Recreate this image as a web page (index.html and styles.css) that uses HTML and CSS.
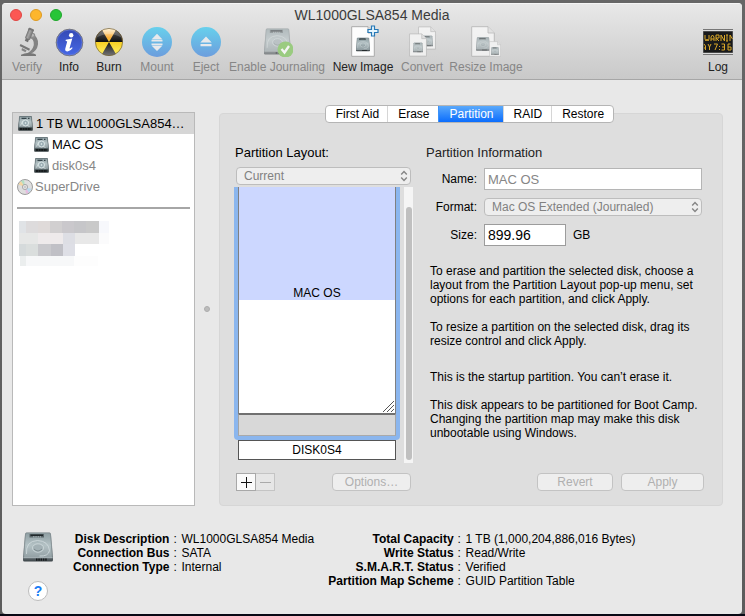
FILE: index.html
```html
<!DOCTYPE html>
<html lang="en">
<head>
<meta charset="utf-8">
<title>WL1000GLSA854 Media</title>
<link rel="stylesheet" href="styles.css">
</head>
<body>
<svg class="defs" aria-hidden="true">
  <defs>
    <linearGradient id="metal" x1="0" y1="0" x2="0" y2="1"><stop offset="0" stop-color="#8f9fa3"/><stop offset=".5" stop-color="#b4c2c5"/><stop offset="1" stop-color="#93a0a4"/></linearGradient>
    <linearGradient id="front" x1="0" y1="0" x2="0" y2="1"><stop offset="0" stop-color="#8b9498"/><stop offset=".8" stop-color="#7a8488"/><stop offset="1" stop-color="#3a4246"/></linearGradient>
    <linearGradient id="sky" x1="0" y1="0" x2="0" y2="1"><stop offset="0" stop-color="#67d0ec"/><stop offset="1" stop-color="#6c9ddd"/></linearGradient>
    <linearGradient id="indigo" x1="0" y1="0" x2="0" y2="1"><stop offset="0" stop-color="#3449b4"/><stop offset="1" stop-color="#4668e6"/></linearGradient>
    <linearGradient id="gold" x1="0" y1="0" x2="0" y2="1"><stop offset="0" stop-color="#fff0cf"/><stop offset=".35" stop-color="#f9ae3a"/><stop offset=".5" stop-color="#f7cf24"/><stop offset="1" stop-color="#fff36a"/></linearGradient>
    <linearGradient id="coal" x1="0" y1="0" x2="0" y2="1"><stop offset="0" stop-color="#555"/><stop offset=".45" stop-color="#111"/><stop offset="1" stop-color="#777"/></linearGradient>
    <linearGradient id="tube" x1="0" y1="0" x2="1" y2="0"><stop offset="0" stop-color="#6f6f6f"/><stop offset=".4" stop-color="#a8a8a8"/><stop offset="1" stop-color="#6f6f6f"/></linearGradient>
    <symbol id="drive" viewBox="0 0 30 30">
      <path d="M3.500.500h23q1.300 0 1.500 1.500L30 25v3q0 1.500-1.500 1.500h-27Q0 29.500 0 28v-3L2 2Q2.200.500 3.500.500z" fill="url(#front)"/>
      <path d="M3.800 1h22.400q1 0 1.200 1L29.300 25.500H.7L2.600 2q.2-1 1.200-1z" fill="url(#metal)" stroke="#7c898d" stroke-width=".5"/>
      <rect x="6.500" y="2" width="14.500" height="3.500" fill="#5a666a"/>
      <path d="M7.500 3.200h12.500" stroke="#20282b" stroke-width="1.500"/>
      <path d="M10 4.800h8" stroke="#c5d0d2" stroke-width=".8" stroke-dasharray="1.500 .8"/>
      <path d="M3.500 22q-1-13 11-13.500 11 .5 12 10-1 6-10 5.500" fill="none" stroke="#d3dddf" stroke-width=".8"/>
      <ellipse cx="15" cy="16" rx="5.500" ry="4.200" fill="#a3b1b5" stroke="#d9e3e4" stroke-width=".7"/>
      <path d="M11 17q4 4 8 0" fill="none" stroke="#7d8b8f" stroke-width="1"/>
      <path d="M.5 25.700h29" stroke="#c2cccf" stroke-width=".7"/>
      <path d="M13 27.700h11" stroke="#15191b" stroke-width="2.200" stroke-dasharray="1.500 .8"/>
    </symbol>
    <symbol id="drive-mini" viewBox="0 0 15 15">
      <path d="M1.500.300h12L14.800 12V14q0 .8-.8.800H1Q.2 14.800.2 14v-2z" fill="#343e40"/>
      <path d="M1.600.500h11.800l1.100 10.700H.5z" fill="url(#metal)" stroke="#66757a" stroke-width=".6"/>
      <path d="M3.500 2.300h5M10 2.300h1.500" stroke="#36454b" stroke-width="1.300"/>
      <circle cx="7.500" cy="7" r="3" fill="#9caeb4" stroke="#e8f3f3" stroke-width=".8"/>
      <circle cx="7.500" cy="7" r=".8" fill="#eef6f6"/>
      <path d="M2.500 9.500 5 4.500M9.500 9.500l2 1" stroke="#dce8e8" stroke-width=".7"/>
      <path d="M2 13h11" stroke="#0c0f10" stroke-width="1.500" stroke-dasharray="2 .6"/>
    </symbol>
    <symbol id="sheet" viewBox="0 0 24 31">
      <path d="M.7.700H17L23.300 7v23.300H.7z" fill="#fdfdfd" stroke="#a4a4a4" stroke-width=".9"/>
      <path d="M17 .7V7h6.300" fill="#e4e4e4" stroke="#a4a4a4" stroke-width=".8"/>
    </symbol>
    <symbol id="updown" viewBox="0 0 8 12"><path d="M1.200 4.500 4 1.500l2.800 3M1.200 7.500l2.800 3 2.800-3" fill="none" stroke="#858585" stroke-width="1.400"/></symbol>
  </defs>
</svg>

<main class="window">
  <header class="titlebar">
    <div class="title-row">
      <div class="lights">
        <button class="light close" aria-label="Close"></button>
        <button class="light minimize" aria-label="Minimize"></button>
        <button class="light maximize" aria-label="Zoom"></button>
      </div>
      <h1>WL1000GLSA854 Media</h1>
    </div>
    <nav class="toolbar" aria-label="Toolbar">
      <button class="tool" disabled>
        <svg viewBox="0 0 32 32"><path d="M21.500 9q6.500 3.500 5.500 10.500-1 6.500-7.500 9.500h-5q5.500-2.500 7.500-6.500 2.500-6-2.500-10z" fill="#838383"/><circle cx="21.300" cy="10.700" r="3" fill="#8d8d8d"/><circle cx="21.300" cy="10.200" r="1.600" fill="#b9b9b9"/><g transform="rotate(22 18 10)"><rect x="15" y="3" width="6" height="3" rx="1.200" fill="#777"/><rect x="15.300" y="5" width="5.400" height="9.500" rx="1" fill="url(#tube)"/><rect x="16.300" y="14" width="3.400" height="3" fill="#707070"/></g><path d="m9.500 19 9.500 4.700-.9 2L8.600 21z" fill="#777"/><path d="m11 23 4.500 2.300-1 2-4-2z" fill="#858585"/><path d="M10 29.700q3-1.700 8-1.700t7 1.700V31H10z" fill="#787878"/></svg>
        <span>Verify</span></button>
      <button class="tool">
        <svg viewBox="0 0 32 32"><circle cx="16.500" cy="17.500" r="13.300" fill="url(#indigo)" stroke="#777" stroke-width="1"/><circle cx="16.500" cy="17.500" r="12.500" fill="none" stroke="#6f82dc" stroke-width=".6"/><circle cx="18.200" cy="10.200" r="2.200" fill="#fff"/><path d="M12.800 14.700 19.300 13.500l-2.700 9.500q-.3 1.500 2.400-.7l.6.700q-2 3.200-5 3.500-3 0-2.300-3l1.900-7-1.700-.7z" fill="#fff"/></svg>
        <span>Info</span></button>
      <button class="tool">
        <svg viewBox="0 0 32 32"><g transform="translate(0 1)"><circle cx="16" cy="16" r="13.800" fill="url(#gold)"/><path d="M16 16 9.100 4A13.800 13.800 0 0 0 2.200 16zM16 16h13.800A13.800 13.800 0 0 0 22.900 4zM16 16 9.100 28a13.800 13.800 0 0 0 13.800 0z" fill="url(#coal)"/><path d="M3 12Q7 3 16 2.700T29 12Q16 4 3 12z" fill="#fff" opacity=".2"/><circle cx="16" cy="16" r="13.600" fill="none" stroke="#70603e" stroke-width=".7"/></g></svg>
        <span>Burn</span></button>
      <button class="tool" disabled>
        <svg viewBox="0 0 32 32"><g transform="translate(0 1)"><circle cx="16" cy="16" r="15" fill="url(#sky)"/><path d="m16 7.700 5.500 5.800H10.500zM10.500 14h11v1.600h-11zM10.500 17.400h11v1.600h-11zM10.500 19.500h11L16 25z" fill="#e7e9ec"/></g></svg>
        <span>Mount</span></button>
      <button class="tool" disabled>
        <svg viewBox="0 0 32 32"><g transform="translate(0 1)"><circle cx="16" cy="16" r="15" fill="url(#sky)"/><path d="m16 10.500 5.700 6H10.300zM10.500 18h11v2.200h-11z" fill="#e7e9ec"/></g></svg>
        <span>Eject</span></button>
      <button class="tool" disabled>
        <svg viewBox="0 0 32 32"><use href="#drive" x="3" y="2" width="27" height="29" opacity=".55"/><circle cx="24.500" cy="24.500" r="8" fill="#9acb80"/><path d="m20.500 24 3 3.500 4.500-6.500" fill="none" stroke="#f4f4f4" stroke-width="2.300"/></svg>
        <span>Enable Journaling</span></button>
      <button class="tool">
        <svg viewBox="0 0 32 32"><use href="#sheet" x="4" y="1" width="24" height="31"/><use href="#drive" x="9" y="12" width="14" height="15"/><path d="M24.500 1h3v3.500H31v3h-3.500V11h-3V7.500H21v-3h3.500z" fill="#e7f7ff" stroke="#2679b7" stroke-width="1.200"/></svg>
        <span>New Image</span></button>
      <button class="tool" disabled>
        <svg viewBox="0 0 32 32"><g opacity=".65"><use href="#sheet" x="12" y="1" width="18" height="24"/><use href="#drive" x="16" y="10" width="11" height="12"/><use href="#sheet" x="3" y="8" width="18" height="24"/><use href="#drive" x="7" y="17" width="10" height="11"/></g></svg>
        <span>Convert</span></button>
      <button class="tool" disabled>
        <svg viewBox="0 0 32 32"><g opacity=".65"><use href="#sheet" x="1" y="1" width="24" height="31"/><use href="#drive" x="6" y="12" width="14" height="14"/><use href="#sheet" x="19" y="16" width="12" height="16"/><use href="#drive" x="21" y="22" width="8" height="8"/></g></svg>
        <span>Resize Image</span></button>
      <button class="tool log">
        <svg viewBox="0 0 32 32"><rect x="1" y="4" width="30" height="26" fill="#777"/><path d="M1 5.500h30M1 28.500h30" stroke="#ddd"/><rect x="1.500" y="6.500" width="29" height="21" fill="#191a1b"/><g transform="translate(0 2)" fill="none" stroke="#d9a728" stroke-width="1"><path d="M3 8v4l1 2 1-2 1 2 1-2V8M9 14v-4l1.500-2L12 10v4M9 12h3M14 14V8h3v3h-3l3 3M19 14V8l3.500 6V8M25 8v6M24 8h2M24 14h2M28 14V8l2.500 4"/><path d="M2 17l1.500 2v4M2 21h1.500M6 17l1.500 3L9 17M7.500 20v3M12 17h3.500L13 23M17.500 19v1M17.500 22v1M19.500 17h3v6h-3M20 20h2.500M28.500 17H26v6h3v-3h-3"/></g></svg>
        <span>Log</span></button>
    </nav>
  </header>

  <div class="content">
    <aside class="sidebar">
      <ul class="disks">
        <li class="disk selected"><svg><use href="#drive-mini"/></svg>1 TB WL1000GLSA854…</li>
        <li class="disk child"><svg><use href="#drive-mini"/></svg>MAC OS</li>
        <li class="disk child dim"><svg><use href="#drive-mini"/></svg>disk0s4</li>
        <li class="disk optical dim"><svg viewBox="0 0 16 16"><circle cx="8" cy="8" r="7.500" fill="#dedede" stroke="#888" stroke-width=".8"/><path d="M8 8 1.500 5.500 4 2z" fill="#f3d7a2"/><path d="M8 8 4 2l3-1z" fill="#b4dfc2"/><path d="m8 8 6.500 2-3 4z" fill="#b8d9ed"/><path d="m8 8 1 6.800 3-1.300z" fill="#e6bbdf"/><circle cx="8" cy="8" r="2.600" fill="#eee" stroke="#999" stroke-width=".8"/><circle cx="8" cy="8" r="1" fill="#fff" stroke="#888" stroke-width=".5"/></svg>SuperDrive</li>
      </ul>
      <hr>
      <svg class="mosaic" viewBox="0 0 90 45" shape-rendering="crispEdges" aria-hidden="true">
        <path d="M0 0h7v12H0z" fill="#e0e3e6"/><path d="M7 0h12v12H7z" fill="#dddbdc"/><path d="M19 0h12v12H19z" fill="#dfdad9"/><path d="M31 0h12v12H31z" fill="#d1cfd0"/><path d="M43 0h12v12H43z" fill="#cac8cc"/><path d="M55 0h12v12H55z" fill="#c6c6c9"/><path d="M67 0h13v12H67z" fill="#c9c9c9"/><path d="M80 0h10v12H80z" fill="#f7f8fc"/>
        <path d="M0 12h19v11H0z" fill="#e6e7e6"/><path d="M19 12h25v11H19z" fill="#eeeaeb"/><path d="M44 12h12v11H44z" fill="#dddee4"/><path d="M56 12h24v11H56z" fill="#e8e8e8"/><path d="M80 12h10v11H80z" fill="#fbfbfc"/>
        <path d="M0 23h7v12H0z" fill="#d5dadb"/><path d="M7 23h12v12H7z" fill="#dadedd"/><path d="M19 23h13v12H19z" fill="#c9c9cd"/><path d="M32 23h12v12H32z" fill="#c0c0c6"/><path d="M44 23h12v12H44z" fill="#dedfe6"/>
        <path d="M1 35h6v10H1z" fill="#ebeeee"/><path d="M7 35h48v10H7z" fill="#f7f8f9"/><path d="M55 35h24v10H55z" fill="#fdfdfd"/>
      </svg>
    </aside>
    <div class="splitter"><i></i></div>
    <section class="panel">
      <div class="tabs" role="tablist">
        <button role="tab">First Aid</button><button role="tab">Erase</button><button role="tab" aria-selected="true">Partition</button><button role="tab">RAID</button><button role="tab">Restore</button>
      </div>
      <div class="columns">
        <div class="layout">
          <h2><label for="scheme">Partition Layout:</label></h2>
          <div class="popup"><select id="scheme" disabled><option>Current</option></select><svg><use href="#updown"/></svg></div>
          <div class="map">
            <div class="partitions">
              <div class="focus">
                <div class="used">MAC OS</div>
                <div class="free"><svg viewBox="0 0 11 11"><path d="M0 11 11 0M4 11l7-7M8 11l3-3" stroke="#555" stroke-width="1"/></svg></div>
                <div class="gap"></div>
              </div>
              <div class="other">DISK0S4</div>
            </div>
            <div class="scroll"><i></i></div>
          </div>
          <div class="actions">
            <div class="plusminus">
              <button aria-label="Add partition"><svg viewBox="0 0 11 11"><path d="M0 5.500h11M5.500 0v11" stroke="#111"/></svg></button>
              <button aria-label="Remove partition" disabled><svg viewBox="0 0 11 11"><path d="M0 5.500h11" stroke="#aaa"/></svg></button>
            </div>
            <button class="push options" disabled>Options…</button>
          </div>
        </div>
        <div class="info">
          <h2>Partition Information</h2>
          <div class="fields">
            <label for="name">Name:</label>
            <input id="name" class="name" value="MAC OS" disabled>
            <label for="format">Format:</label>
            <div class="popup"><select id="format" disabled><option>Mac OS Extended (Journaled)</option></select><svg><use href="#updown"/></svg></div>
            <label for="size">Size:</label>
            <div class="size-row"><input id="size" class="size" value="899.96"><span>GB</span></div>
          </div>
          <div class="notes">
            <p>To erase and partition the selected disk, choose a<br>layout from the Partition Layout pop-up menu, set<br>options for each partition, and click Apply.</p>
            <p>To resize a partition on the selected disk, drag its<br>resize control and click Apply.</p>
            <p class="status">This is the startup partition. You can’t erase it.</p>
            <p>This disk appears to be partitioned for Boot Camp.<br>Changing the partition map may make this disk<br>unbootable using Windows.</p>
          </div>
          <div class="commit">
            <button class="push revert" disabled>Revert</button>
            <button class="push apply" disabled>Apply</button>
          </div>
        </div>
      </div>
    </section>
  </div>

  <footer class="footer">
    <div class="corner">
      <svg class="big-drive"><use href="#drive"/></svg>
      <button class="help" aria-label="Help">?</button>
    </div>
    <dl class="facts first">
      <dt>Disk Description</dt><dd>WL1000GLSA854 Media</dd>
      <dt>Connection Bus</dt><dd>SATA</dd>
      <dt>Connection Type</dt><dd>Internal</dd>
    </dl>
    <dl class="facts second">
      <dt>Total Capacity</dt><dd>1 TB (1,000,204,886,016 Bytes)</dd>
      <dt>Write Status</dt><dd>Read/Write</dd>
      <dt>S.M.A.R.T. Status</dt><dd>Verified</dd>
      <dt>Partition Map Scheme</dt><dd>GUID Partition Table</dd>
    </dl>
  </footer>
</main>
</body>
</html>
```
FILE: styles.css
```css
* { box-sizing: border-box; }

body {
  margin: 0;
  min-height: 100vh;
  display: flex;
  padding: 3px 3px 2px 2px;
  background: linear-gradient(#666 0, #5c5c5c calc(100% - 2px), #080814 calc(100% - 2px));
  font: 12px/14px "Liberation Sans", Arial, sans-serif;
  color: #000;
}

button, input, select { font: inherit; color: inherit; margin: 0; }
button { padding: 0; border: 0; background: none; }
h1, h2, p, ul, dl, dd { margin: 0; padding: 0; }
svg { display: block; flex: none; }
.defs { position: absolute; width: 0; height: 0; }

.window {
  flex: 1;
  min-width: 0;
  display: flex;
  flex-direction: column;
  border-radius: 4px;
  background: #e8e8e8;
  overflow: hidden;
}

/* Title bar and toolbar */
.titlebar {
  background: linear-gradient(#e8e8e8, #c9c9c9);
  border-top: 1px solid #f5f5f5;
  border-bottom: 1px solid #a6a6a6;
  padding-bottom: 4px;
}
.title-row {
  display: grid;
  grid-template-columns: 1fr auto 1fr;
  align-items: center;
  height: 21px;
  padding: 0 8px;
}
.title-row h1 { font-size: 14px; font-weight: 400; line-height: 20px; color: #3b3b3b; }
.lights { display: flex; gap: 8px; }
.light { width: 12px; height: 12px; border-radius: 50%; border: 1px solid; }
.close { background: #fc5753; border-color: #df4744; }
.minimize { background: #fdb62c; border-color: #dd9a24; }
.maximize { background: #27c538; border-color: #1fa62c; }

.toolbar {
  display: grid;
  grid-template-columns: 42px 42px 38px 58px 40px 102px 70px 48px 80px 1fr;
  padding: 0 8px 0 4px;
}
.tool {
  display: flex;
  flex-direction: column;
  align-items: center;
  gap: 2px;
  line-height: 16px;
  white-space: nowrap;
  min-width: 0;
  color: #222;
}
.tool svg { width: 32px; height: 32px; }
.tool:disabled { color: #868686; }
.log { justify-self: end; }

/* Main content */
.content { flex: 1; display: flex; padding: 32px 19px 0 10px; }

.sidebar { width: 183px; background: #fff; border: 1px solid #b9b9b9; font-size: 13px; }
.disks { list-style: none; }
.disk { display: flex; align-items: center; gap: 3px; height: 21px; padding-left: 5px; white-space: nowrap; }
.disk svg { width: 15px; height: 15px; }
.child { padding-left: 21px; }
.optical { padding-left: 4px; gap: 2px; }
.optical svg { width: 16px; height: 16px; }
.selected { background: #d6d6d6; }
.dim { color: #868686; }
.sidebar hr { margin: 10px 4px 12px; border: 0; height: 2px; background: #a6a6a6; }
.mosaic { width: 90px; height: 45px; margin-left: 6px; }

.splitter { width: 24px; display: flex; align-items: center; justify-content: center; }
.splitter i { width: 6px; height: 6px; border-radius: 50%; background: #bcbcbc; border: 1px solid #adadad; }

.panel {
  flex: 1;
  min-width: 0;
  margin-top: 1px;
  background: #dedede;
  border: 1px solid #d6d6d6;
  border-radius: 4px;
  padding: 0 18px 14px 15px;
}
.tabs { display: flex; width: max-content; margin: -9px auto 0; border: 1px solid #b5b5b5; border-radius: 4px; background: #fff; overflow: hidden; }
.tabs button { height: 16px; padding: 0 9px 0 10px; border-left: 1px solid #d6d6d6; }
.tabs button:first-child { border-left: 0; padding-right: 8px; }
.tabs [aria-selected] { color: #fff; background: linear-gradient(#5aa9fb, #0b6dfd); border-color: #3b92fa; }

.columns { display: flex; gap: 13px; padding-top: 22px; }
h2 { font-size: 13px; font-weight: 400; line-height: 16px; }
.layout { width: 178px; display: flex; flex-direction: column; }
.layout .popup { margin: 6px 2px 2px 1px; }

.popup { position: relative; }
.popup select {
  display: block;
  width: 100%;
  height: 18px;
  padding: 0 20px 0 7px;
  appearance: none;
  border: 1px solid #bdbdbd;
  border-radius: 4px;
  background: #eee;
  color: #818181;
  opacity: 1;
}
.popup svg { position: absolute; right: 3px; top: 3px; width: 8px; height: 12px; }

.map { display: flex; justify-content: space-between; height: 276px; }
.partitions { width: 166px; margin-left: -1px; text-align: center; }
.focus { height: 253px; padding: 0 4px 4px; background: #8bb6ee; border-radius: 0 0 4px 4px; display: flex; flex-direction: column; }
.focus > div { border: solid #808080; border-width: 0 1px; }
.used { height: 113px; background: #ccd7ff; display: flex; align-items: flex-end; justify-content: center; }
.free { flex: 1; background: #fff; display: flex; align-items: flex-end; justify-content: flex-end; padding: 1px; }
.free svg { width: 11px; height: 11px; }
.focus .gap { height: 23px; background: #d8d8d8; border-color: #a5a5a5; border-top: 2px solid #707070; border-bottom: 1px solid #aaa; }
.other { margin: 0 4px; height: 20px; line-height: 18px; background: #fff; border: 1px solid #555; }
.scroll { width: 9px; padding: 20px 1px 3px 2px; background: #f5f5f5; }
.scroll i { display: block; height: 100%; border-radius: 3px; background: #c0c0c0; }

.actions { display: flex; justify-content: space-between; margin: 10px 2px 0 1px; }
.plusminus { display: flex; }
.plusminus button { width: 20px; height: 18px; display: grid; place-items: center; background: #fafafa; border: 1px solid #a8a8a8; }
.plusminus button:disabled { background: #e6e6e6; border-color: #c4c4c4; border-left: 0; width: 19px; }
.plusminus svg { width: 11px; height: 11px; }

.push { height: 18px; border: 1px solid #c3c3c3; border-radius: 4px; background: #eee; color: #b0b0b0; }
.options { width: 79px; }
.revert { width: 76px; }
.apply { width: 83px; }

.info { flex: 1; min-width: 0; display: flex; flex-direction: column; }
.info h2 { color: #222; }
.fields {
  display: grid;
  grid-template-columns: 51px 1fr;
  column-gap: 7px;
  row-gap: 8px;
  align-items: center;
  margin: 7px 2px 0 0;
}
.fields label { text-align: right; }
.fields input { height: 22px; padding: 0 3px; border: 1px solid #b5b5b5; border-radius: 0; background: #fff; font-size: 13px; }
.fields .name { width: 100%; color: #868686; }
.fields .size { width: 82px; border-color: #9c9c9c; font-size: 14px; }
.size-row { display: flex; align-items: center; gap: 7px; }

.notes { padding: 18px 0 0 4px; white-space: nowrap; }
.notes p { margin-bottom: 14px; }
.notes .status { padding-top: 8px; }
.commit { display: flex; justify-content: flex-end; gap: 8px; margin-top: auto; }

/* Disk summary */
.footer { display: flex; padding: 26px 20px 13px 21px; }
.corner { width: 30px; display: flex; flex-direction: column; align-items: center; gap: 19px; }
.big-drive { width: 30px; height: 30px; }
.help { width: 20px; height: 20px; border-radius: 50%; border: 1px solid #bdbdbd; background: #fff; color: #1a7df5; font-size: 14px; font-weight: 700; line-height: 18px; }
.facts { display: grid; grid-template-columns: auto auto; align-content: start; column-gap: 4px; white-space: nowrap; }
.facts dt { font-weight: 700; text-align: right; }
.facts dd::before { content: ":"; display: inline-block; width: 8px; }
.first { margin-left: 20px; }
.second { margin-left: 14px; }
```
